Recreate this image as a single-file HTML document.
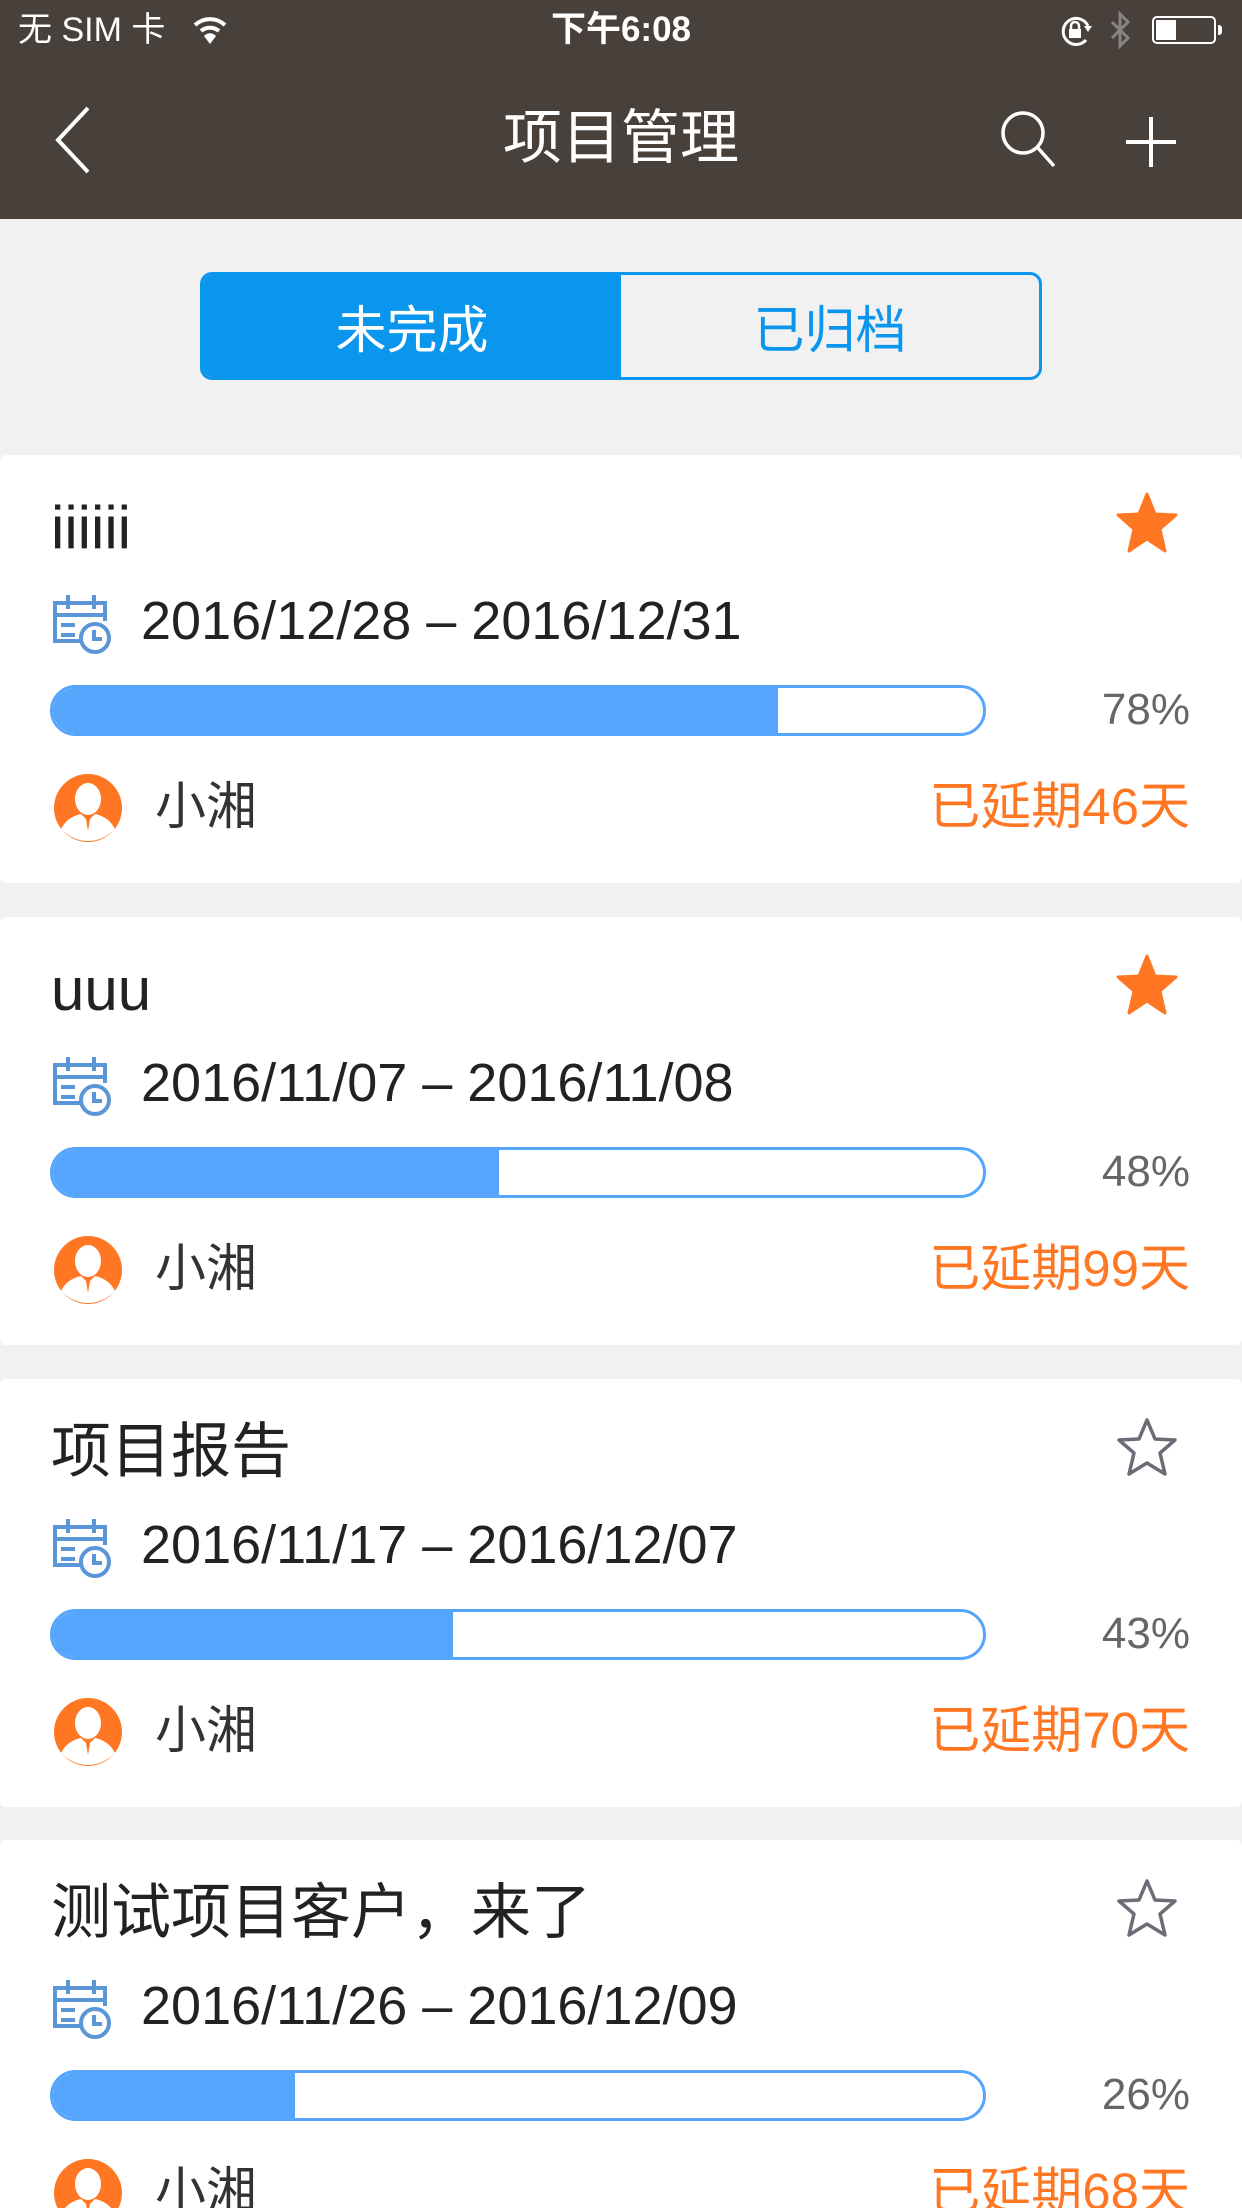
<!DOCTYPE html>
<html><head><meta charset="utf-8">
<style>
*{margin:0;padding:0;box-sizing:border-box}
html,body{width:1242px;height:2208px;overflow:hidden}
body{background:#f1f1f1;font-family:"Liberation Sans","Noto Sans CJK SC",sans-serif;position:relative}
.nav{position:absolute;left:0;top:0;width:1242px;height:219px;background:#48403b;color:#fff}
.abs{position:absolute}
.seg{position:absolute;left:200px;top:272px;width:842px;height:108px;border:3px solid #0a96ec;border-radius:12px;overflow:hidden;background:#f1f1f1}
.seg div{position:absolute;top:0;height:100%;width:50%;display:flex;align-items:center;justify-content:center;font-size:51px}
.card{position:absolute;left:0;width:1242px;height:428px;background:#fff;border-radius:6px}
.title{position:absolute;left:51px;top:38px;font-size:60px;color:#222;line-height:70px}
.date{position:absolute;left:141px;top:134px;font-size:54px;color:#222;line-height:64px}
.bar{position:absolute;left:50px;top:230px;width:936px;height:51px;border:3px solid #56a5fc;border-radius:26px;overflow:hidden;background:#fff}
.bar i{position:absolute;left:0;top:0;bottom:0;background:#56a5fc}
.pct{position:absolute;right:52px;top:227px;font-size:44px;color:#666;line-height:56px}
.name{position:absolute;left:155px;top:320px;font-size:51px;color:#333;line-height:64px}
.delay{position:absolute;right:52px;top:320px;font-size:51px;color:#ff7722;line-height:64px}
.cal{position:absolute;left:51px;top:136px}
.av{position:absolute;left:53px;top:318px}
.star{position:absolute;left:1114px;top:36px}
</style></head><body>
<div class="nav">
  <div class="abs" style="left:18px;top:10px;font-size:34px;line-height:40px">无 SIM 卡</div>
  <svg class="abs" style="left:192px;top:14px" width="36" height="32" viewBox="0 0 36 32"><path d="M3 11 A22 22 0 0 1 33 11" stroke="#fff" stroke-width="4" fill="none"/><path d="M9 17 A14 14 0 0 1 27 17" stroke="#fff" stroke-width="4" fill="none"/><path d="M18 30 L12 22 A8 8 0 0 1 24 22 Z" fill="#fff"/></svg>
  <div class="abs" style="left:0;width:1242px;top:8px;text-align:center;font-size:35px;font-weight:bold;line-height:44px">下午6:08</div>
  <svg class="abs" style="left:1058px;top:14px" width="36" height="34" viewBox="0 0 36 34"><path d="M30 12 A13 13 0 1 0 28 26" stroke="#fff" stroke-width="3" fill="none"/><path d="M26 12 L34 12 L30 18Z" fill="#fff"/><rect x="11" y="15" width="12" height="9" fill="#fff"/><path d="M13 15 V12 A4 4 0 0 1 21 12 V15" stroke="#fff" stroke-width="2.5" fill="none"/></svg>
  <svg class="abs" style="left:1108px;top:10px" width="26" height="42" viewBox="0 0 26 42"><path d="M4 12 L20 28 L12 36 V4 L20 12 L4 28" stroke="#8a8480" stroke-width="3" fill="none"/></svg>
  <div class="abs" style="left:1152px;top:16px;width:64px;height:28px;border:2px solid #fff;border-radius:5px"><div style="position:absolute;left:2px;top:2px;width:20px;height:20px;background:#fff"></div></div>
  <div class="abs" style="left:1218px;top:25px;width:4px;height:10px;background:#fff;border-radius:0 3px 3px 0"></div>
  <svg class="abs" style="left:50px;top:104px" width="44" height="72" viewBox="0 0 44 72"><path d="M38 4 L8 36 L38 68" stroke="#fff" stroke-width="4" fill="none"/></svg>
  <div class="abs" style="left:0;width:1242px;top:102px;text-align:center;font-size:59px;line-height:72px">项目管理</div>
  <svg class="abs" style="left:998px;top:108px" width="64" height="62" viewBox="0 0 64 62"><circle cx="25" cy="25" r="20" stroke="#fff" stroke-width="3.5" fill="none"/><path d="M40 40 L56 58" stroke="#fff" stroke-width="3.5"/></svg>
  <svg class="abs" style="left:1124px;top:115px" width="54" height="54" viewBox="0 0 54 54"><path d="M27 2 V52 M2 27 H52" stroke="#fff" stroke-width="4"/></svg>
</div>
<div class="seg"><div style="left:0;background:#0a96ec;color:#fff">未完成</div><div style="left:50%;color:#0a96ec">已归档</div></div>

<div class="card" style="top:455px">
 <div class="title">iiiiii</div>
 <svg class="star" width="66" height="64" viewBox="0 0 66 64"><path d="M33 3 L41 23 L62 24 L46 38 L51 60 L33 48 L15 60 L20 38 L4 24 L25 23Z" fill="#ff7722" stroke="#ff7722" stroke-width="3" stroke-linejoin="round"/></svg>
 <svg class="cal" width="62" height="64" viewBox="0 0 62 64"><g stroke="#5b97d6" stroke-width="4" fill="none"><path d="M36 50 H4 V12 H54 V30"/><path d="M4 24 H54"/><path d="M17 4 V18 M43 4 V18"/><path d="M10 34 H24 M10 44 H24"/><circle cx="44" cy="47" r="14" fill="#fff"/><path d="M43 39 V48 H51"/></g></svg>
 <div class="date">2016/12/28 – 2016/12/31</div>
 <div class="bar"><i style="width:78%"></i></div>
 <div class="pct">78%</div>
 <svg class="av" width="70" height="70" viewBox="0 0 70 70"><circle cx="35" cy="35" r="34" fill="#ff7722"/><ellipse cx="35" cy="26" rx="13" ry="16" fill="#fff"/><path d="M8 56 Q14 44 28 41 L35 48 L42 41 Q56 44 62 56 Q50 68 35 68 Q20 68 8 56Z" fill="#fff"/><path d="M33 46 L35 58 L37 46Z" fill="#ff7722"/></svg>
 <div class="name">小湘</div>
 <div class="delay">已延期46天</div>
</div>

<div class="card" style="top:917px">
 <div class="title">uuu</div>
 <svg class="star" width="66" height="64" viewBox="0 0 66 64"><path d="M33 3 L41 23 L62 24 L46 38 L51 60 L33 48 L15 60 L20 38 L4 24 L25 23Z" fill="#ff7722" stroke="#ff7722" stroke-width="3" stroke-linejoin="round"/></svg>
 <svg class="cal" width="62" height="64" viewBox="0 0 62 64"><g stroke="#5b97d6" stroke-width="4" fill="none"><path d="M36 50 H4 V12 H54 V30"/><path d="M4 24 H54"/><path d="M17 4 V18 M43 4 V18"/><path d="M10 34 H24 M10 44 H24"/><circle cx="44" cy="47" r="14" fill="#fff"/><path d="M43 39 V48 H51"/></g></svg>
 <div class="date">2016/11/07 – 2016/11/08</div>
 <div class="bar"><i style="width:48%"></i></div>
 <div class="pct">48%</div>
 <svg class="av" width="70" height="70" viewBox="0 0 70 70"><circle cx="35" cy="35" r="34" fill="#ff7722"/><ellipse cx="35" cy="26" rx="13" ry="16" fill="#fff"/><path d="M8 56 Q14 44 28 41 L35 48 L42 41 Q56 44 62 56 Q50 68 35 68 Q20 68 8 56Z" fill="#fff"/><path d="M33 46 L35 58 L37 46Z" fill="#ff7722"/></svg>
 <div class="name">小湘</div>
 <div class="delay">已延期99天</div>
</div>

<div class="card" style="top:1379px">
 <div class="title">项目报告</div>
 <svg class="star" width="66" height="64" viewBox="0 0 66 64"><path d="M33 5 L41 24 L61 25 L46 38 L51 59 L33 48 L15 59 L20 38 L5 25 L25 24Z" fill="none" stroke="#6a6d75" stroke-width="3.5" stroke-linejoin="round"/></svg>
 <svg class="cal" width="62" height="64" viewBox="0 0 62 64"><g stroke="#5b97d6" stroke-width="4" fill="none"><path d="M36 50 H4 V12 H54 V30"/><path d="M4 24 H54"/><path d="M17 4 V18 M43 4 V18"/><path d="M10 34 H24 M10 44 H24"/><circle cx="44" cy="47" r="14" fill="#fff"/><path d="M43 39 V48 H51"/></g></svg>
 <div class="date">2016/11/17 – 2016/12/07</div>
 <div class="bar"><i style="width:43%"></i></div>
 <div class="pct">43%</div>
 <svg class="av" width="70" height="70" viewBox="0 0 70 70"><circle cx="35" cy="35" r="34" fill="#ff7722"/><ellipse cx="35" cy="26" rx="13" ry="16" fill="#fff"/><path d="M8 56 Q14 44 28 41 L35 48 L42 41 Q56 44 62 56 Q50 68 35 68 Q20 68 8 56Z" fill="#fff"/><path d="M33 46 L35 58 L37 46Z" fill="#ff7722"/></svg>
 <div class="name">小湘</div>
 <div class="delay">已延期70天</div>
</div>

<div class="card" style="top:1840px;height:368px;border-radius:6px 6px 0 0">
 <div class="title">测试项目客户，来了</div>
 <svg class="star" width="66" height="64" viewBox="0 0 66 64"><path d="M33 5 L41 24 L61 25 L46 38 L51 59 L33 48 L15 59 L20 38 L5 25 L25 24Z" fill="none" stroke="#6a6d75" stroke-width="3.5" stroke-linejoin="round"/></svg>
 <svg class="cal" width="62" height="64" viewBox="0 0 62 64"><g stroke="#5b97d6" stroke-width="4" fill="none"><path d="M36 50 H4 V12 H54 V30"/><path d="M4 24 H54"/><path d="M17 4 V18 M43 4 V18"/><path d="M10 34 H24 M10 44 H24"/><circle cx="44" cy="47" r="14" fill="#fff"/><path d="M43 39 V48 H51"/></g></svg>
 <div class="date">2016/11/26 – 2016/12/09</div>
 <div class="bar"><i style="width:26%"></i></div>
 <div class="pct">26%</div>
 <svg class="av" width="70" height="70" viewBox="0 0 70 70"><circle cx="35" cy="35" r="34" fill="#ff7722"/><ellipse cx="35" cy="26" rx="13" ry="16" fill="#fff"/><path d="M8 56 Q14 44 28 41 L35 48 L42 41 Q56 44 62 56 Q50 68 35 68 Q20 68 8 56Z" fill="#fff"/><path d="M33 46 L35 58 L37 46Z" fill="#ff7722"/></svg>
 <div class="name">小湘</div>
 <div class="delay">已延期68天</div>
</div>
</body></html>
